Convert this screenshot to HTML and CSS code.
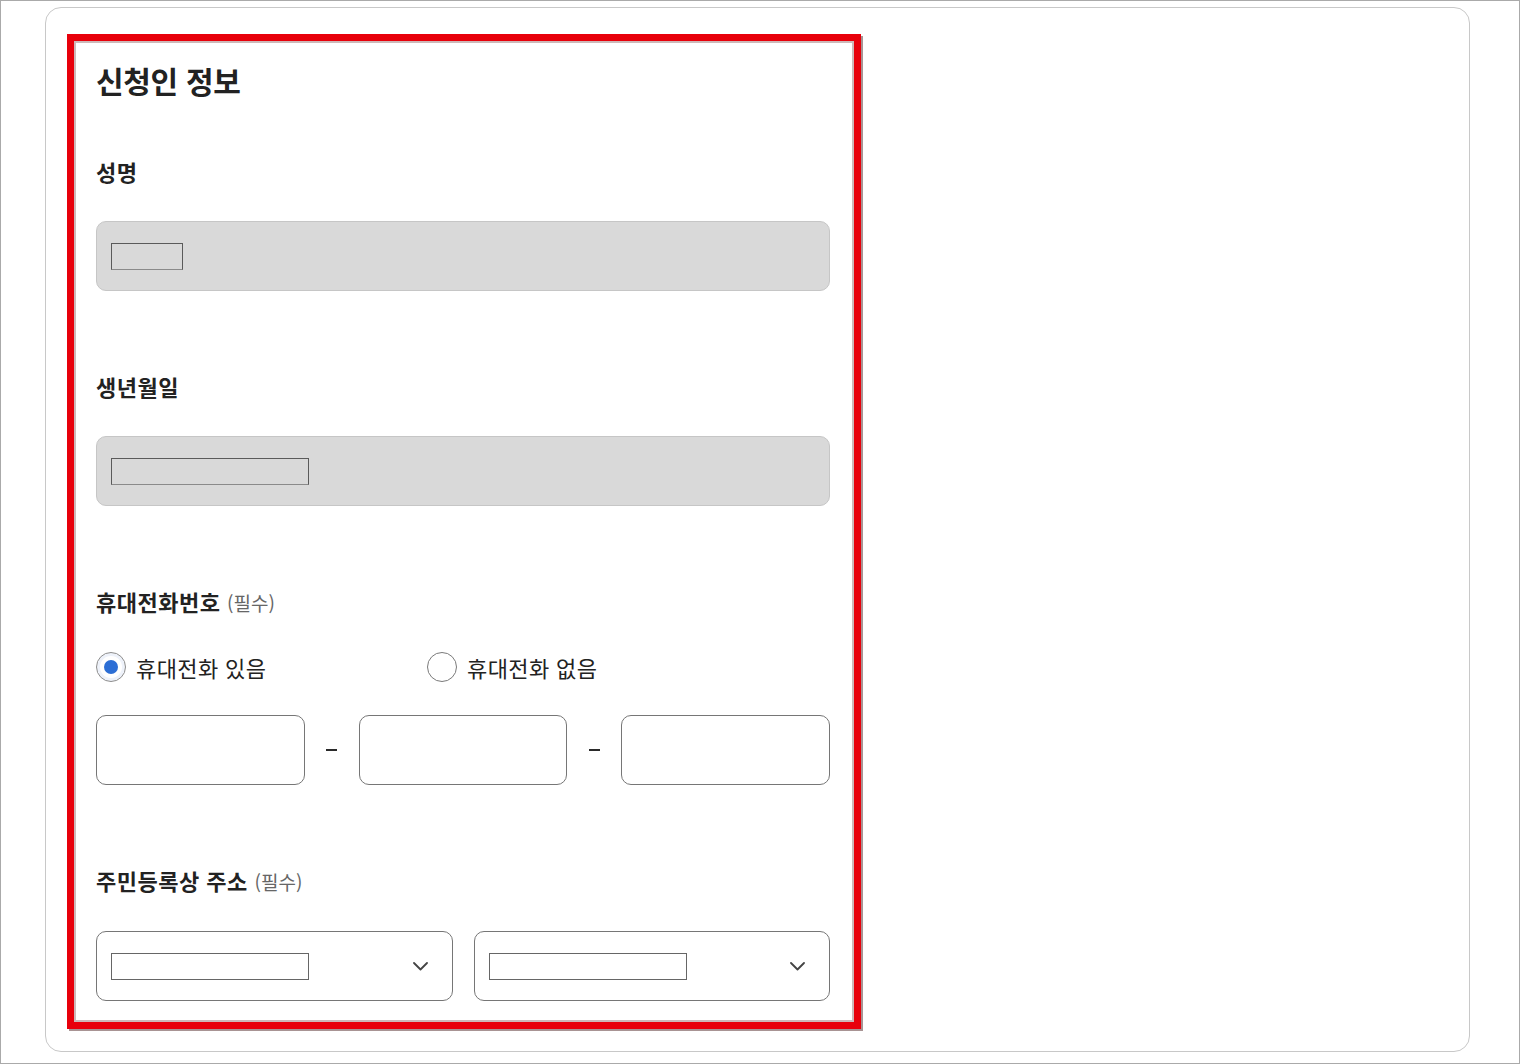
FILE: index.html
```html
<!DOCTYPE html>
<html lang="ko">
<head>
<meta charset="utf-8">
<title>신청인 정보</title>
<link rel="stylesheet" href="styles.css">
</head>
<body>
<div class="frame">
  <div class="card">
    <section class="panel">
      <h2 class="title">신청인 정보</h2>

      <div class="field">
        <div class="label">성명</div>
        <div class="readonly">
          <span class="mini mini-short"></span>
        </div>
      </div>

      <div class="field">
        <div class="label">생년월일</div>
        <div class="readonly">
          <span class="mini mini-long"></span>
        </div>
      </div>

      <div class="field">
        <div class="label">휴대전화번호 <span class="req">(필수)</span></div>
        <div class="radios">
          <label class="radio radio-first"><span class="dot checked"></span><span class="rtext">휴대전화 있음</span></label>
          <label class="radio"><span class="dot"></span><span class="rtext">휴대전화 없음</span></label>
        </div>
        <div class="phone">
          <div class="box"></div>
          <div class="dash"><span></span></div>
          <div class="box"></div>
          <div class="dash"><span></span></div>
          <div class="box"></div>
        </div>
      </div>

      <div class="field">
        <div class="label">주민등록상 주소 <span class="req">(필수)</span></div>
        <div class="selects">
          <div class="select">
            <span class="mini mini-long white"></span>
            <svg class="chev" width="15" height="9" viewBox="0 0 15 9"><polyline points="1,1 7.5,7.5 14,1" fill="none" stroke="#444" stroke-width="1.8" stroke-linecap="round" stroke-linejoin="round"/></svg>
          </div>
          <div class="select">
            <span class="mini mini-long white"></span>
            <svg class="chev" width="15" height="9" viewBox="0 0 15 9"><polyline points="1,1 7.5,7.5 14,1" fill="none" stroke="#444" stroke-width="1.8" stroke-linecap="round" stroke-linejoin="round"/></svg>
          </div>
        </div>
      </div>
    </section>
  </div>
</div>
</body>
</html>
```

FILE: styles.css
```css
* { box-sizing: border-box; }
html, body { margin: 0; padding: 0; background: #fff; }
body {
  font-family: "Noto Sans CJK KR", "Noto Sans", sans-serif;
  color: #222;
}
.frame {
  width: 1520px;
  height: 1064px;
  border: 1px solid #aaaaaa;
  padding: 6px 0 0 44px;
  overflow: hidden;
}
.card {
  width: 1425px;
  height: 1045px;
  border: 1px solid #c8c8c8;
  border-radius: 16px;
  padding: 26px 0 0 21px;
}
.panel {
  width: 794px;
  height: 995px;
  border: 7px solid #e8000b;
  box-shadow: inset 0 0 0 2px #cdb9b9, 2px 2px 0 #a89494;
  padding: 19px 24px 0 22px;
  background: #fff;
}
.title {
  margin: 0;
  font-size: 30px;
  font-weight: 700;
  line-height: 40px;
  color: #222;
  letter-spacing: -0.3px;
}
.field { margin-top: 57px; }
.field + .field { margin-top: 81px; }
.label {
  font-size: 22px;
  font-weight: 700;
  line-height: 28px;
  height: 30px;
  color: #222;
  letter-spacing: 0.5px;
}
.req {
  font-size: 19px;
  font-weight: 400;
  color: #666;
  letter-spacing: 0;
}
.readonly {
  margin-top: 34px;
  height: 70px;
  background: #d9d9d9;
  border: 1px solid #c6c6c6;
  border-radius: 10px;
  display: flex;
  align-items: center;
  padding-left: 14px;
}
.mini {
  display: block;
  height: 27px;
  border: 1px solid #5a5a5a;
  border-bottom-color: #8a8a8a;
}
.mini-short { width: 72px; }
.mini-long { width: 198px; }
.mini.white { background: #fff; border-color: #666; }
.radios {
  margin-top: 35px;
  height: 30px;
  display: flex;
  align-items: center;
}
.radio {
  display: flex;
  align-items: center;
  gap: 10px;
}
.radio-first { width: 331px; }
.dot {
  width: 30px;
  height: 30px;
  border-radius: 50%;
  border: 1px solid #7a7a7a;
  background: #fff;
  display: flex;
  align-items: center;
  justify-content: center;
  flex: none;
}
.dot.checked {
  border-color: #8c8c8c;
  box-shadow: inset 0 0 0 3px #eef2fa;
}
.dot.checked::after {
  content: "";
  width: 14px;
  height: 14px;
  border-radius: 50%;
  background: #2c6ed5;
}
.rtext {
  font-size: 22px;
  line-height: 28px;
  color: #222;
  letter-spacing: 0.4px;
}
.phone {
  margin-top: 33px;
  display: grid;
  grid-template-columns: 1fr 54px 1fr 54px 1fr;
  height: 70px;
}
.box {
  border: 1px solid #767676;
  border-radius: 10px;
  background: #fff;
}
.dash {
  display: flex;
  align-items: center;
  justify-content: center;
}
.dash span {
  display: block;
  width: 11px;
  height: 2px;
  background: #2a2a2a;
}
.selects {
  margin-top: 35px;
  display: grid;
  grid-template-columns: 1fr 1fr;
  gap: 21px;
}
.select {
  height: 70px;
  border: 1px solid #767676;
  border-radius: 10px;
  display: flex;
  align-items: center;
  justify-content: space-between;
  padding: 0 24px 0 14px;
}
.chev { display: block; }
```
